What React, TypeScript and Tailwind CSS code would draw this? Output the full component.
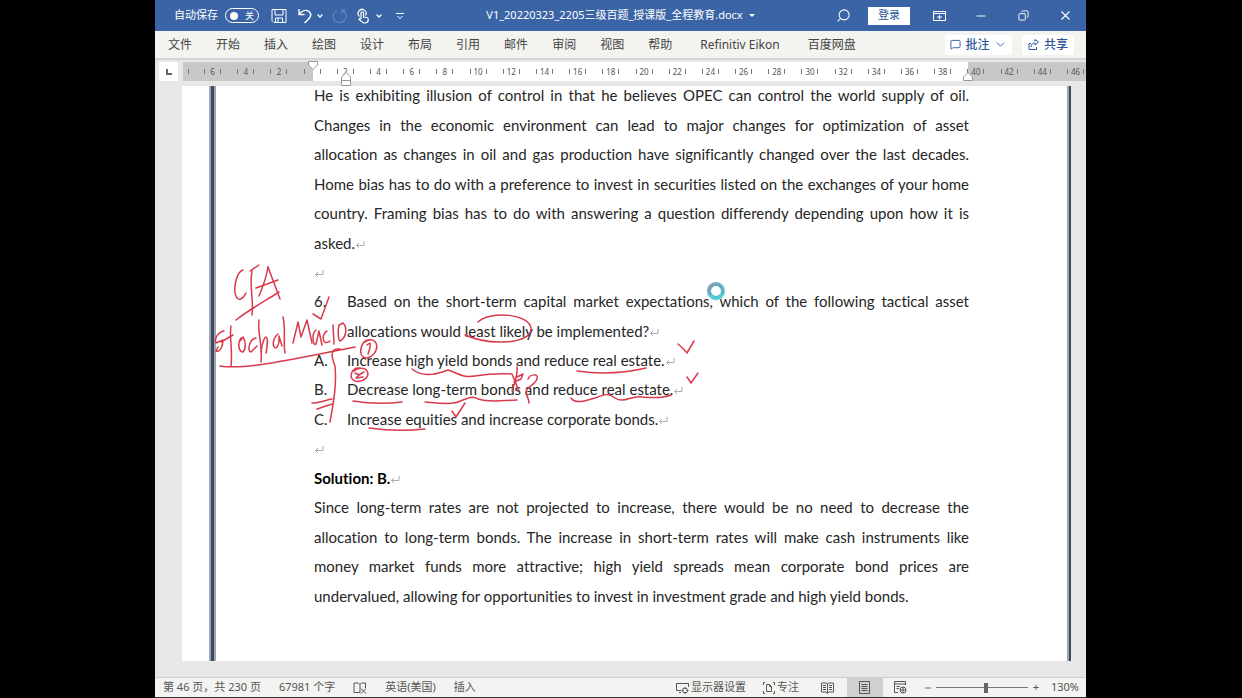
import { useState } from 'react';
import type { ReactNode } from 'react';
import { ChevronDown, Copy, MessageSquare, Minus, Search, X } from 'lucide-react';

const TABS = [
  '文件', '开始', '插入', '绘图', '设计', '布局', '引用', '邮件', '审阅', '视图', '帮助',
  'Refinitiv Eikon', '百度网盘',
];

// Ruler labels, two characters apart; 0 is the left margin and has no label
const RULER = Array.from({ length: 27 }, (_, i) => Math.abs(i * 2 - 6));

const INTRO = [
  'He is exhibiting illusion of control in that he believes OPEC can control the world supply of oil.',
  'Changes in the economic environment can lead to major changes for optimization of asset',
  'allocation as changes in oil and gas production have significantly changed over the last decades.',
  'Home bias has to do with a preference to invest in securities listed on the exchanges of your home',
  'country. Framing bias has to do with answering a question differendy depending upon how it is',
  'asked.',
];

const OPTIONS = [
  { key: 'A.', text: 'Increase high yield bonds and reduce real estate.' },
  { key: 'B.', text: 'Decrease long-term bonds and reduce real estate.' },
  { key: 'C.', text: 'Increase equities and increase corporate bonds.' },
];

const SOLUTION = [
  'Since long-term rates are not projected to increase, there would be no need to decrease the',
  'allocation to long-term bonds. The increase in short-term rates will make cash instruments like',
  'money market funds more attractive; high yield spreads mean corporate bond prices are',
  'undervalued, allowing for opportunities to invest in investment grade and high yield bonds.',
];

// Pen strokes
const INK = [
  // CFA
  'M243 270C236 272 233 290 236 296C238 302 243 299 246 293',
  'M252 271C249 285 254 300 252 315',
  'M250 271L259 265',
  'M268 267C266 280 261 291 259 296',
  'M268 267C272 278 276 288 280 299',
  'M256 288L278 280',
  'M236 320C250 309 265 301 279 292',
  'M329 297L321 319L313 314',
  // Global Macro
  'M224 331C218 332 214 339 216 343L223 340C223 346 220 353 216 351L218 347',
  'M231 326C229 338 233 350 231 366',
  'M221 342L233 335',
  'M241 338C237 344 239 352 243 352C246 349 246 341 243 337L240 341',
  'M256 338C249 339 247 352 251 352L257 346',
  'M259 320C257 332 263 345 261 362',
  'M261 352C264 331 270 333 266 353',
  'M278 334C272 339 272 348 276 348C280 345 279 338 279 336L282 346',
  'M283 317C286 330 283 342 285 353',
  'M293 343L298 322L301 337L307 320L312 343',
  'M316 330C311 334 313 347 316 344L319 331L322 345',
  'M327 331C321 334 322 347 330 341',
  'M333 325L334 344',
  'M339 325C337 332 339 341 340 341C346 338 348 328 343 323L339 325',
  'M220 366C245 370 290 360 355 347',
  // bracket and circled numbers
  'M340 349C330 348 331 356 335 366C337 385 333 405 330 422',
  'M371 340C362 338 358 352 363 357C371 361 379 350 376 343C374 339 369 339 365 342',
  'M367 345L370 343C371 347 369 351 368 354',
  'M360 368C351 367 348 379 355 381C364 383 370 376 367 371C365 367 357 368 354 371',
  'M355 373L359 375L364 372M359 375L356 378L363 377',
  'M312 403C319 403 326 400 332 399',
  'M317 409C323 407 328 405 333 404',
  'M353 401Q377 405 402 402',
  'M369 428Q397 432 425 429',
  'M452 411L456 417L465 403',
  // answer marks
  'M412 369C424 379 440 373 448 370C458 373 462 378 475 376C488 374 500 373 512 374L519 391',
  'M517 367C518 375 515 382 512 391',
  'M517 377L523 374L521 379L514 382',
  'M528 379C530 374 539 373 537 379C535 385 526 387 526 392C526 396 529 398 529 403',
  'M425 402C437 403 450 405 458 402C466 399 472 395 478 399C490 403 505 400 517 400',
  'M478 322C490 310 531 314 531 329C531 344 490 346 465 335',
  'M678 344C682 347 685 351 687 353L694 341',
  'M577 371Q612 376 646 368',
  'M687 377L691 383L698 373',
  'M571 398C576 405 587 400 595 398C605 394 609 393 615 398C624 404 631 395 642 397C652 398 663 398 671 395',
];

function Return() {
  return (
    <svg className="mb-[2px] inline h-[9px] w-[10px]" viewBox="0 0 10 9" fill="none" stroke="#adadad" aria-hidden="true">
      <path d="M9 1V5.500H1.500M4 3L1.500 5.500L4 8" />
    </svg>
  );
}

function Lines({ lines }: { lines: string[] }) {
  return (
    <p>
      {lines.map((line, i) =>
        i < lines.length - 1 ? (
          <span key={line} className="block whitespace-nowrap [text-align-last:justify] odd:pb-px">
            {line}
          </span>
        ) : (
          <span key={line} className="block whitespace-nowrap">
            {line}
            {line === 'asked.' && <Return />}
          </span>
        ),
      )}
    </p>
  );
}

function TitleBar() {
  const [autoSave, setAutoSave] = useState(false);
  return (
    <header className="grid h-[31px] shrink-0 grid-cols-[1fr_auto_1fr] items-center bg-[#3a64a5] text-[11px] text-white">
      <div className="flex items-center pl-[19px]">
        <span id="autosave">自动保存</span>
        <button
          role="switch"
          aria-checked={autoSave}
          aria-labelledby="autosave"
          onClick={() => setAutoSave(!autoSave)}
          className="ml-[7px] flex h-[15px] w-[34px] items-center justify-between rounded-full border border-white px-[4px] text-[9px]"
        >
          <span className="size-[8px] rounded-full bg-white" />
          关
        </button>
        <button aria-label="保存" className="ml-[12px]">
          <svg className="size-[16px]" viewBox="0 0 16 16" fill="none" stroke="currentColor">
            <path d="M1 1.500H15V14.500H3L1 12.500ZM4 1.500V7H12V1.500M4.500 14.500V10H11.500V14.500M7 10V14" />
          </svg>
        </button>
        <button aria-label="撤消" className="ml-[10px]">
          <svg className="size-[16px]" viewBox="0 0 16 16" fill="none" stroke="currentColor" strokeWidth="1.400">
            <path d="M2 1V6.500H7.500M2 6.500C5 2.500 9 1.500 12 3.500C16 7 13 10 7.500 15" />
          </svg>
        </button>
        <ChevronDown size={8} strokeWidth={4} className="ml-[3px]" />
        <button aria-label="恢复" className="ml-[8px] text-[#5c82bf]">
          <svg className="size-[16px]" viewBox="0 0 16 16" fill="none" stroke="currentColor" strokeWidth="1.300">
            <path d="M5 2.500C0 5 0 12 5 14C10 16 15 12 14 7C13.500 4.500 12 3 10 2.500M10 6V2H14" />
          </svg>
        </button>
        <button aria-label="触摸/鼠标模式" className="ml-[8px]">
          <svg className="size-[16px]" viewBox="0 0 16 16" fill="none" stroke="currentColor" strokeWidth="1.200">
            <path d="M3.500 8.500A4 4 0 1 1 9.500 7.500M5 11V5A1.200 1.200 0 0 1 7.500 5V9L11 9.500Q12.500 10 12.300 12Q12 15 9 15H7.500L3 11.500Q3 10 5 11" />
          </svg>
        </button>
        <ChevronDown size={8} strokeWidth={4} className="ml-[3px]" />
        <button aria-label="自定义快速访问工具栏" className="ml-[13px]">
          <svg className="size-[8px]" viewBox="0 0 8 8" fill="none" stroke="currentColor">
            <path d="M0 1.500H8M1.500 4L4 6.500L6.500 4" />
          </svg>
        </button>
      </div>
      <h1 className="flex items-center gap-[6px] whitespace-nowrap">
        V1_20220323_2205三级百题_授课版_全程教育.docx
        <svg className="h-[3px] w-[6px]" viewBox="0 0 6 3" fill="currentColor">
          <path d="M0 0H6L3 3Z" />
        </svg>
      </h1>
      <div className="flex h-full items-center justify-end">
        <button aria-label="搜索" className="mr-[17px]">
          <Search size={15} strokeWidth={1.7} className="-scale-x-100" />
        </button>
        <button className="mr-[8px] h-[18px] w-[42px] bg-white text-[#2b579a]">登录</button>
        <button aria-label="功能区显示选项" className="flex h-full w-[42px] items-center justify-center">
          <svg className="h-[10px] w-[13px]" viewBox="0 0 13 10" fill="none" stroke="currentColor">
            <path d="M.5 .5H12.500V9.500H.5ZM.5 2.500H12.500M6.500 8.500V4M4 6H9" />
          </svg>
        </button>
        <button aria-label="最小化" className="flex h-full w-[42px] items-center justify-center">
          <Minus size={14} strokeWidth={1.7} />
        </button>
        <button aria-label="还原" className="flex h-full w-[42px] items-center justify-center">
          <Copy size={11} strokeWidth={2} className="-scale-x-100" />
        </button>
        <button aria-label="关闭" className="flex h-full w-[42px] items-center justify-center">
          <X size={15} strokeWidth={1.7} />
        </button>
      </div>
    </header>
  );
}

function Ribbon() {
  return (
    <div className="flex h-[27px] shrink-0 items-center justify-between bg-[#f3f3f0] pr-[12px] pl-[13px] text-[12px]">
      <nav className="flex gap-[24px] whitespace-nowrap text-[#444]">
        {TABS.map((tab) => (
          <button key={tab} className="nth-12:mx-[4px]">
            {tab}
          </button>
        ))}
      </nav>
      <div className="flex gap-[10px] font-medium text-[#2b579a]">
        <button className="flex h-[20px] w-[67px] items-center justify-between rounded-[2px] bg-white px-[5px]">
          <MessageSquare size={11} />
          批注
          <ChevronDown size={13} strokeWidth={1.7} />
        </button>
        <button className="flex h-[20px] w-[52px] items-center justify-between rounded-[2px] bg-white px-[6px]">
          <svg className="size-[11px]" viewBox="0 0 11 11" fill="none" stroke="currentColor">
            <path d="M3 4.500H1V10.500H8.500V8M3 8C3 5 5 4 7 4V6L10.500 3L7 .5V2.500" />
          </svg>
          共享
        </button>
      </div>
    </div>
  );
}

function Ruler() {
  return (
    <div className="flex h-[28px] shrink-0 items-start border-t-2 border-[#d4d4d4] bg-[#e7e7e7] pt-[2px] pl-[4px]">
      <button aria-label="制表符" className="flex size-[19px] items-center justify-center bg-white">
        <span className="size-[6px] border-b-2 border-l-2 border-[#666]" />
      </button>
      <div className="relative ml-[5px] flex h-[19px] min-w-0 flex-1 items-center overflow-hidden bg-[#c8c8c8] text-[8px] text-[#555]">
        <div className="absolute inset-y-0 right-[118px] left-[130px] bg-white" />
        <span className="relative ml-[5px] h-[5px] w-[8px] shrink-0 border-l border-[#777]" />
        <div className="relative flex w-[896px] shrink-0">
          {RULER.map((n, i) => (
            <span key={i} className="flex flex-1 items-center justify-center">
              <span className="flex w-[17px] items-center justify-between">
                <i className="h-[5px] w-px bg-[#777]" />
                {n > 0 && n}
                <i className="h-[5px] w-px bg-[#777]" />
              </span>
            </span>
          ))}
        </div>
      </div>
    </div>
  );
}

function RulerMarkers() {
  return (
    <svg
      className="pointer-events-none absolute top-[59px] left-[150px] h-[28px] w-[672px]"
      viewBox="305 59 672 28"
      fill="#fff"
      stroke="#999"
      aria-hidden="true"
    >
      <path d="M308.500 61.500H317.500V65L313 69.500L308.500 65Z" />
      <path d="M341.500 85.500V77L346 72.500L350.500 77V85.500ZM341.500 80.500H350.500" />
      <path d="M963.500 80.500V77L968 72.500L972.500 77V80.500Z" />
    </svg>
  );
}

function Numbered({ label, children }: { label: string; children: ReactNode }) {
  return (
    <div className="flex">
      <span className="w-[33px] shrink-0">{label}</span>
      <div className="min-w-0 flex-1">{children}</div>
    </div>
  );
}

function Document() {
  return (
    <main className="flex min-h-0 flex-1 bg-[#e7e7e7] pr-[15px] pb-[16px] pl-[27px]">
      <article className="relative flex min-w-0 flex-1 overflow-hidden bg-white pl-[27px]">
        <div className="w-[7px] shrink-0 border-x-2 border-[#9aa6b2] bg-[#3b4a5e]" />
        <div className="min-w-0 flex-1 pr-[98px] pl-[98px] font-[Lato,'Noto_Sans_CJK_SC',sans-serif] text-[15px] leading-[29px] text-[#262626] [font-variant-ligatures:none]">
          <div className="-mt-[5px]">
            <Lines lines={INTRO} />
            <p><Return /></p>
            <Numbered label="6.">
              <span className="block whitespace-nowrap pb-px [text-align-last:justify]">
                Based on the short-term capital market expectations, which of the following tactical asset
              </span>
              <span className="block whitespace-nowrap">
                allocations would least likely be implemented?
                <Return />
              </span>
            </Numbered>
            {OPTIONS.map(({ key, text }) => (
              <div key={key} className="odd:pb-px">
                <Numbered label={key}>
                  {text}
                  <Return />
                </Numbered>
              </div>
            ))}
            <p className="pb-px"><Return /></p>
            <h2 className="font-bold text-black">
              Solution: B.
              <Return />
            </h2>
            <Lines lines={SOLUTION} />
          </div>
        </div>
        <div className="w-[4px] shrink-0 border-l-2 border-[#9aa6b2] bg-[#3b4a5e]" />
        <svg
          className="pointer-events-none absolute top-0 left-0 h-[575px] w-[888px]"
          viewBox="182 86 888 575"
          fill="none"
          stroke="#d93a4b"
          strokeWidth="1.500"
          strokeLinecap="round"
          strokeLinejoin="round"
          aria-hidden="true"
        >
          {INK.map((d) => (
            <path key={d} d={d} />
          ))}
          {/* busy pointer */}
          <circle cx="716" cy="291" r="7" fill="#fff" stroke="#5fb0bf" strokeWidth="4" />
          <circle cx="716" cy="291" r="9" stroke="#b9dbe2" strokeWidth="1" />
          <path d="M709 290A7 7 0 0 1 716 284" stroke="#8a9fb3" strokeWidth="3" />
          <path d="M722 295A7 7 0 0 1 711 296" stroke="#4fd0d8" strokeWidth="3" />
        </svg>
      </article>
    </main>
  );
}

function StatusBar() {
  const [zoom, setZoom] = useState(130);
  return (
    <footer className="flex h-[21px] shrink-0 items-center justify-between border-t border-b border-t-[#cfcfcf] border-b-[#333] bg-[#f3f3f1] pr-[7px] pl-[8px] text-[11px] whitespace-nowrap text-[#555]">
      <div className="flex items-center gap-[18px]">
        <span>第 46 页，共 230 页</span>
        <span>67981 个字</span>
        <svg className="h-[12px] w-[14px]" viewBox="0 0 14 12" fill="none" stroke="currentColor">
          <path d="M7 10.500H1V1H5.500L7 2.500V10.500M7 2.500L8.500 1H12.500V6M8 6.500L13 11.500M13 6.500L8 11.500" />
        </svg>
        <span>英语(美国)</span>
        <span>插入</span>
      </div>
      <div className="flex h-full items-center">
        <button className="mr-[17px] flex items-center gap-[2px]">
          <svg className="h-[12px] w-[13px]" viewBox="0 0 13 12" fill="none" stroke="currentColor">
            <path d="M5 8.500H.5V1.500H12.500V5M3 10.500H5" />
            <circle cx="9" cy="8.500" r="2.500" />
            <path d="M9 5V7M9 10V12M5.500 8.500H7.500M10.500 8.500H12.500" />
          </svg>
          显示器设置
        </button>
        <button className="mr-[10px] flex items-center gap-[2px]">
          <svg className="size-[12px]" viewBox="0 0 12 12" fill="none" stroke="currentColor">
            <path d="M3.500 2.500H6.500L8.500 4.500V9.500H3.500ZM6.500 2.500V4.500H8.500M2 .5H.5V3M.5 9V11.500H2M10 .5H11.500V3M11.500 9V11.500H10" />
          </svg>
          专注
        </button>
        <button aria-label="阅读视图" className="flex h-full w-[38px] items-center justify-center">
          <svg className="h-[12px] w-[13px]" viewBox="0 0 13 12" fill="none" stroke="currentColor">
            <path d="M6.500 1.500V11.500M.5 1H5L6.500 2L8 1H12.500V10H8L6.500 11L5 10H.5ZM2 3.500H5M2 5.500H5M2 7.500H5M8 3.500H11M8 5.500H11M8 7.500H11" />
          </svg>
        </button>
        <button aria-label="页面视图" className="flex h-full w-[36px] items-center justify-center bg-[#d0d0ce]">
          <svg className="h-[13px] w-[11px]" viewBox="0 0 11 13" fill="none" stroke="currentColor">
            <path d="M.5 .5H10.500V12.500H.5ZM2.500 3.500H8.500M2.500 5.500H8.500M2.500 7.500H8.500M2.500 9.500H8.500" />
          </svg>
        </button>
        <button aria-label="Web 版式视图" className="flex h-full w-[36px] items-center justify-center">
          <svg className="h-[13px] w-[13px]" viewBox="0 0 13 13" fill="none" stroke="currentColor">
            <path d="M4 11.500H.5V.5H11.500V4M.5 3H11.500M2.500 5.500H6M2.500 7.500H5" />
            <circle cx="9" cy="9" r="3" />
            <path d="M6 9H12M9 6V12" />
          </svg>
        </button>
        <button aria-label="缩小" className="ml-[4px]" onClick={() => setZoom(zoom - 10)}>
          <Minus size={10} />
        </button>
        <input
          type="range"
          aria-label="缩放"
          min={10}
          max={230}
          value={zoom}
          onChange={(e) => setZoom(Number(e.target.value))}
          className="mx-[3px] h-[11px] w-[92px] appearance-none bg-[linear-gradient(#777,#777)] bg-[length:100%_1px] bg-center bg-no-repeat [&::-webkit-slider-thumb]:h-[10px] [&::-webkit-slider-thumb]:w-[4px] [&::-webkit-slider-thumb]:appearance-none [&::-webkit-slider-thumb]:bg-[#666]"
        />
        <button aria-label="放大" className="w-[10px] text-center" onClick={() => setZoom(zoom + 10)}>
          +
        </button>
        <span className="ml-[10px]">{zoom}%</span>
      </div>
    </footer>
  );
}

export default function App() {
  return (
    <div className="h-screen bg-black pr-[156px] pl-[155px] font-['Noto_Sans','Noto_Sans_CJK_SC',sans-serif]">
      <div className="relative flex h-full flex-col overflow-hidden">
        <TitleBar />
        <Ribbon />
        <Ruler />
        <RulerMarkers />
        <Document />
        <StatusBar />
      </div>
    </div>
  );
}
